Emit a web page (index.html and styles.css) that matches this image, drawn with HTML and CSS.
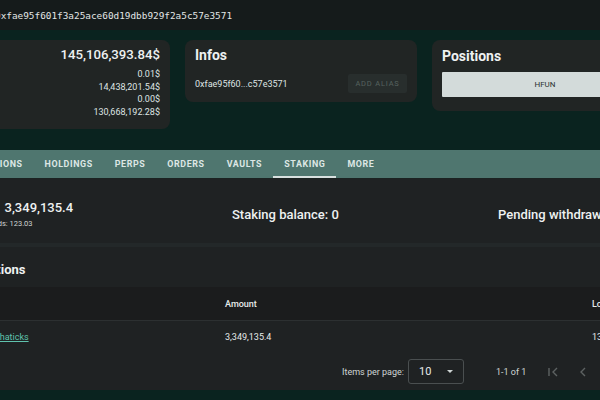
FILE: index.html
```html
<!DOCTYPE html>
<html>
<head>
<meta charset="utf-8">
<link rel="stylesheet" href="styles.css">
</head>
<body>
<div class="page">
  <header class="topbar"><span class="addr">0xfae95f601f3a25ace60d19dbb929f2a5c57e3571</span></header>

  <section class="cards">
    <div class="card card-value">
      <div class="big">145,106,393.84$</div>
      <div class="small">0.01$</div>
      <div class="small">14,438,201.54$</div>
      <div class="small">0.00$</div>
      <div class="small">130,668,192.28$</div>
    </div>
    <div class="card card-infos">
      <div class="card-title">Infos</div>
      <div class="info-row">
        <span class="short-addr">0xfae95f60...c57e3571</span>
        <button class="alias-btn">ADD ALIAS</button>
      </div>
    </div>
    <div class="card card-positions">
      <div class="card-title">Positions</div>
      <button class="pos-btn">HFUN</button>
    </div>
  </section>

  <nav class="tabs">
    <span class="tab">TRANSACTIONS</span>
    <span class="tab">HOLDINGS</span>
    <span class="tab">PERPS</span>
    <span class="tab">ORDERS</span>
    <span class="tab">VAULTS</span>
    <span class="tab active">STAKING</span>
    <span class="tab">MORE</span>
  </nav>

  <section class="staking">
    <div class="stake-col first">
      <div class="stake-main"><span class="stake-key">Staked:</span><span>3,349,135.4</span></div>
      <div class="stake-sub">Pending rewards: 123.03</div>
    </div>
    <div class="stake-col"><div class="stake-label">Staking balance: 0</div></div>
    <div class="stake-col"><div class="stake-label">Pending withdrawals: 0</div></div>
  </section>

  <div class="band"></div>

  <section class="deleg">
    <h2 class="deleg-title">Delegations</h2>
    <div class="trow thead">
      <span>Validator</span>
      <span>Amount</span>
      <span>Locked until</span>
    </div>
    <div class="trow tbody">
      <span><a class="vlink" href="#">Hypurr Mathaticks</a></span>
      <span>3,349,135.4</span>
      <span>13/05/2025</span>
    </div>
    <div class="paginator">
      <span class="ipp">Items per page:</span>
      <div class="select"><span>10</span><span class="caret"></span></div>
      <span class="range">1-1 of 1</span>
      <svg class="pg-icon first-icon" width="14" height="14" viewBox="0 0 14 14"><path d="M3 3v8M11 3L7 7l4 4" fill="none" stroke="#5d6262" stroke-width="1.4"/></svg>
      <svg class="pg-icon" width="14" height="14" viewBox="0 0 14 14"><path d="M9 3L5 7l4 4" fill="none" stroke="#5d6262" stroke-width="1.4"/></svg>
    </div>
  </section>
</div>
</body>
</html>
```

FILE: styles.css
```css
* { box-sizing: border-box; }
html, body { margin: 0; padding: 0; }
body {
  background: #0a231f;
  font-family: Roboto, "Noto Sans", sans-serif;
  color: #e6eaea;
  width: 600px;
  height: 400px;
  overflow: hidden;
}
.page {
  margin-left: -40px;
  width: 720px;
}
.topbar {
  height: 30px;
  background: #151b1b;
  display: flex;
  align-items: center;
  padding-left: 35px;
}
.addr {
  font-family: "DejaVu Sans Mono", monospace;
  font-size: 9.4px;
  color: #e2e6e6;
}
.cards {
  height: 120px;
  padding: 10px 0 0 20px;
  display: flex;
  gap: 15px;
  align-items: flex-start;
}
.card {
  background: #212524;
  border-radius: 8px;
}
.card-value {
  width: 190px;
  padding: 5px 10px 10px 10px;
  text-align: right;
}
.big {
  font-size: 13.2px;
  font-weight: 500;
  line-height: 20px;
  margin-bottom: 3px;
  color: #eef1f1;
}
.small {
  font-size: 9px;
  line-height: 12.7px;
  color: #dfe4e3;
}
.card-title {
  font-size: 14px;
  font-weight: 700;
  line-height: 18px;
  color: #eef1f1;
}
.card-infos {
  width: 232px;
  padding: 6px 10px 7px 10px;
}
.info-row {
  margin-top: 8px;
  height: 23px;
  display: flex;
  align-items: center;
  justify-content: space-between;
}
.short-addr {
  font-size: 9px;
  color: #dfe4e3;
}
.alias-btn {
  width: 59px;
  height: 19px;
  border: none;
  background: #282e2d;
  color: #56625f;
  font-family: Roboto, sans-serif;
  font-size: 7.5px;
  letter-spacing: 0.8px;
  padding: 0;
  border-radius: 2px;
}
.card-positions {
  width: 240px;
  padding: 7px 10px 14px 10px;
}
.pos-btn {
  display: block;
  margin-top: 7px;
  width: 206px;
  height: 25px;
  border: none;
  background: #d3dbda;
  color: #2c3332;
  font-family: Roboto, sans-serif;
  font-size: 8px;
  border-radius: 1px;
}
.tabs {
  height: 29px;
  margin-left: -22px;
  background: #4f766f;
  display: flex;
  align-items: stretch;
  border-bottom: 1px solid #1c2322;
}
.tab {
  display: flex;
  align-items: center;
  padding: 1px 11px 0 11px;
  font-size: 8.9px;
  font-weight: 700;
  letter-spacing: 0.6px;
  color: #dde7e5;
  border-bottom: 2px solid transparent;
}
.tab.active {
  border-bottom-color: #d8e0df;
}
.staking {
  height: 64px;
  padding-top: 6px;
  background: #1f2223;
  display: grid;
  grid-template-columns: 272px 266px auto;
  align-items: center;
}
.stake-col.first {
  margin-left: -7px;
}
.stake-main {
  display: flex;
  gap: 8px;
  font-size: 13px;
  font-weight: 500;
  line-height: 17px;
  color: #eef1f1;
}
.stake-sub {
  font-size: 7.5px;
  line-height: 10px;
  margin-top: 3px;
  margin-left: -3px;
  color: #cfd5d4;
}
.stake-label {
  font-size: 13px;
  font-weight: 500;
  color: #eef1f1;
}
.band {
  height: 4px;
  background: #232829;
}
.deleg {
  height: 143px;
  background: #1f2223;
  padding-top: 13px;
}
.deleg-title {
  margin: 0 0 0 -4px;
  font-size: 13px;
  font-weight: 700;
  line-height: 20px;
  color: #eef1f1;
}
.trow {
  display: grid;
  grid-template-columns: 270px 367px auto;
  align-items: center;
  margin-left: -5px;
  font-size: 9px;
  color: #e6eaea;
}
.thead {
  margin-top: 7px;
  height: 33px;
  background: #1b1c1d;
  font-weight: 500;
}
.tbody {
  height: 33px;
  border-top: 1px solid #2c3031;
  font-size: 9px;
}
.vlink {
  color: #5fc3ae;
  text-decoration: underline;
}
.paginator {
  height: 37px;
  display: flex;
  align-items: center;
  padding-left: 382px;
  font-size: 9px;
  color: #cfd5d4;
}
.select {
  margin-left: 4px;
  width: 56px;
  height: 25px;
  border: 1px solid #4a4f50;
  border-radius: 3px;
  display: flex;
  align-items: center;
  justify-content: space-between;
  padding: 0 10px 0 10px;
  font-size: 11px;
  color: #e6eaea;
}
.caret {
  width: 0;
  height: 0;
  border-left: 3.5px solid transparent;
  border-right: 3.5px solid transparent;
  border-top: 3.5px solid #cfd5d4;
}
.range {
  margin-left: 32px;
}
.pg-icon {
  margin-left: 16px;
}
.first-icon {
  margin-left: 20px;
}
```
